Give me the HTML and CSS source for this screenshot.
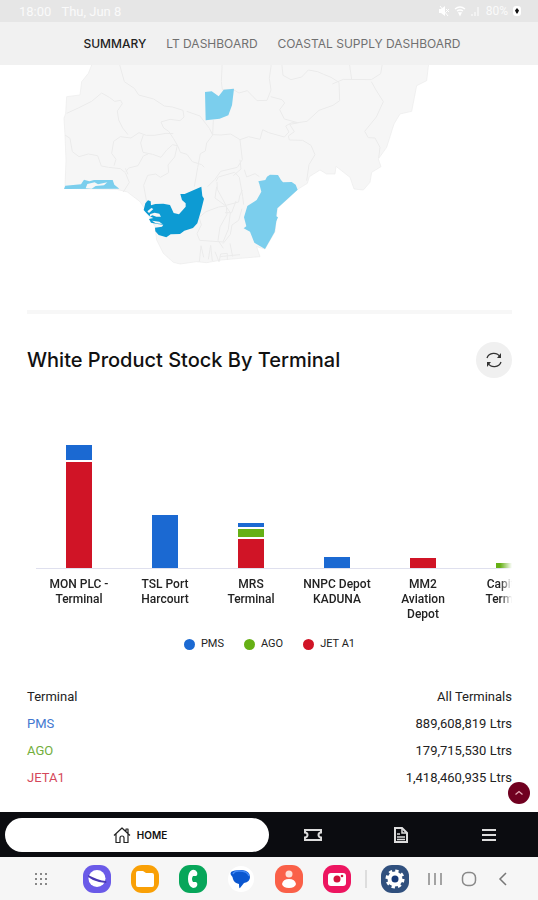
FILE: index.html
```html
<!DOCTYPE html>
<html lang="en">
<head>
<meta charset="utf-8">
<meta name="viewport" content="width=device-width, initial-scale=1">
<title>White Product Stock</title>
<link rel="stylesheet" href="styles.css">
</head>
<body>
<div class="app">
  <header class="status">
    <span class="status-time">18:00</span>
    <span>Thu, Jun 8</span>
    <span class="status-icons">
      <svg width="10" height="12" viewBox="0 0 10 12"><path d="M0 4h2l4-3v10l-4-3H0z" fill="#fff"/><path d="M1 1l8 10M7 4l3 3m0-3L7 7" stroke="#fff"/></svg>
      <svg width="12" height="12" viewBox="0 0 12 12"><path d="M1 4q5-4 10 0M3 6q3-2 6 0M5 8h2L6 10z" fill="none" stroke="#fff" stroke-width="1.3"/></svg>
      <svg width="10" height="12" viewBox="0 0 10 12"><path d="M1 11V9M4 11V7M7 11V2" stroke="#f6f6f6" stroke-width="1.5"/></svg>
      <span>80%</span>
      <svg width="8" height="12" viewBox="0 0 8 12"><rect y="1" width="8" height="10" rx="3" fill="#fff"/><path d="M4 3L6 5.500 4.500 8.500h-1L2 5.500z" fill="#111"/></svg>
    </span>
  </header>
  <nav class="tabs" aria-label="Dashboards">
    <a class="tab tab-active" href="#summary">SUMMARY</a>
    <a class="tab" href="#lt">LT DASHBOARD</a>
    <a class="tab" href="#coastal">COASTAL SUPPLY DASHBOARD</a>
  </nav>
  <main class="content">
    <svg class="map" viewBox="27 65 485 202" role="img" aria-label="Map of stock by state">
      <g transform="translate(40 60) scale(.33333)" stroke-linejoin="round">
        <path class="land" d="M170 0L155 15l-10 25-20 25-5 40-40 5-3 50-5 15 3 50 3 75-3 85 155 3 32 8 38 29 20 30 25 45 5 40 20 40 30 27 20 5 50-7 30 3 45-8 55-5 60-5-10-30 25 7 30-52 7-70 61-57 29-18 6-20 32-20 20 12h25l3-23 42 33 12 35 28 3 20-23 5-30 28-17-8-23 25-35 22-70 18-30 35-8 15-77 30-15 7-60z"/>
        <g class="border">
          <path d="M80 160l35-16 40-20 30-25 23 13 16 12 18-3 5 10-15 22 4 27 12 24 16 20"/>
          <path d="M235 0l18 65 30 20 13 20 45 12 32 21 24 3 32 10 3 20-12 11-30-4-27 8 8 18 15 10 14 21 14 24 7 18 20 6 16 22 28 9 8 8"/>
          <path d="M75 225l15 10 7 40 20 15 28-8 28 5 11 31 22 4 35 4 15 12 12 29-18 29"/>
          <path d="M222 317l6-19-13-18 6-36 20-14 32 4 24-16 22 8 24 0 35-6 22 1"/>
          <path d="M310 225l-8 24 7 28 29 6 25 9 17-22 18-16 13 3"/>
          <path d="M258 335l8-11 28-7 16-29 14-6M256 325l8 18"/>
          <path d="M320 426l-9-50 12-30 24-4 14 10 25-14-2-23 20-24 8-34"/>
          <path d="M547 0l-3 65 3 24 22 0 8-2 20 12 25-7 29 30 30-1 12-31-5-35 7-50"/>
          <path d="M520 180l-2 44 25 1 29-3 28 17 7 60-15 23-50 12-17 24-22 22"/>
          <path d="M440 154l40 14 28 37 10 20-18 24-4 24-15 8-8 42-10 57"/>
          <path d="M600 239l26-9 34 8 8-29 18 9 47 13 14-15-10-18 18-10 22 0"/>
          <path d="M692 110l34 9 8 10-15 20 14 28 40 11 28-4 36-33 42-15 20-14-2-55-24-15-22-9-18-8-28-5-20 21-32 8-24-13-4-40"/>
          <path d="M773 189l-24 4 14 22-18 13 3 12 40 1 25 15 12 28-18 30-7 48"/>
          <path d="M877 72l33-14 84 1 28-18 6-36M935 58l-8-55M994 65l14 25 22 35-21 46-35 43 11 19 20 1 15 28-4 32"/>
          <path d="M600 299l3 28-23 20M528 364l7-13 49-14 14 15 10 57 3 25M607 390l-8 18-3 18-38 10-26-48-1-22M658 350l-13-9-25 10-7-22M530 380l-5 34 34 25 2 24-21 38-6 40 16 24"/>
          <path d="M480 470l18-15 38-14 21-3 14 20-6 50-16 38-70-5-8-20 13-26-7-25M549 551l22-28 5-28 20-14 10-35M570 550l8 40M555 458l20 0 13-35"/>
          <path d="M478 605l5-48 8 35M505 598l7-42 5 47M525 575l12 30 5-23 20-2 0 20M540 590l60-6"/>
        </g>
        <path class="stock-low" d="M495 96l20-2 21 15 15-20 31-3-6 50-11 30-26 10-42 5z"/>
        <path class="stock-low" d="M72 387l4-10 47-4 9-14 16 5 14-4h56l5 14 15 12z"/>
        <path class="map-gap" d="M142 372l22-5 10 6 28-6-10 9-25 2-12 8-18-1z"/>
        <path class="stock-high" d="M421 402L434 402 484 380 487 408 492 416 483 452 472 490 459 504 433 512 420 522 392 523 379 532 356 525 346 514 345 503 366 500 370 494 352 492 333 488 327 477 340 474 328 468 319 459 311 450 316 430 324 421 332 424 333 436 346 432 370 431 390 435 401 459 417 463 437 440 437 430 426 420z"/>
        <path class="map-gap" d="M331 462l13-4 14 3 5 9-14 0-12-4-9 5zM336 482l22 3 9 7-20-2zM322 454l12-10 6 3-13 12z"/>
        <path class="stock-low" d="M655 364L676 360 681 350 690 344 714 345 723 360 729 367 755 366 767 374 773 389 712 445 709 469 714 472 709 484 704 516 675 567 643 548 630 515 611 505 619 499 612 472 622 438 650 420 664 395 658 372z"/>
      </g>
    </svg>
    <hr class="rule">
    <section class="stock" aria-labelledby="stock-title">
      <div class="stock-head">
        <h1 id="stock-title" class="title">White Product Stock By Terminal</h1>
        <button class="refresh" type="button" aria-label="Refresh">
          <svg width="18" height="18" viewBox="0 0 18 18" fill="none" stroke="#333" stroke-width="1.300"><path d="M2 7a7 6.500 0 0 1 13-1M16 11a7 6.500 0 0 1-13 1"/><path d="M16 2v5h-4zM2 16v-5h4z" fill="#333" stroke="none"/></svg>
        </button>
      </div>
      <div class="chart">
        <div class="column"><div class="bar"><i class="pms" style="height:15px"></i><i class="jet" style="height:106px"></i></div><p class="label">MON PLC -<br>Terminal</p></div>
        <div class="column"><div class="bar"><i class="pms" style="height:53px"></i></div><p class="label">TSL Port<br>Harcourt</p></div>
        <div class="column"><div class="bar"><i class="pms" style="height:4px"></i><i class="ago" style="height:8px"></i><i class="jet" style="height:29px"></i></div><p class="label">MRS<br>Terminal</p></div>
        <div class="column"><div class="bar"><i class="pms" style="height:11px"></i></div><p class="label">NNPC Depot<br>KADUNA</p></div>
        <div class="column"><div class="bar"><i class="jet" style="height:10px"></i></div><p class="label">MM2<br>Aviation<br>Depot</p></div>
        <div class="column"><div class="bar"><i class="ago" style="height:5px"></i></div><p class="label">Capital -<br>Terminal</p></div>
      </div>
      <ul class="legend">
        <li><i class="dot pms"></i>PMS</li>
        <li><i class="dot ago"></i>AGO</li>
        <li><i class="dot jet"></i>JET A1</li>
      </ul>
      <table class="totals">
        <thead><tr><th scope="col">Terminal</th><th scope="col">All Terminals</th></tr></thead>
        <tbody>
          <tr><th scope="row" class="text-pms">PMS</th><td>889,608,819 Ltrs</td></tr>
          <tr><th scope="row" class="text-ago">AGO</th><td>179,715,530 Ltrs</td></tr>
          <tr><th scope="row" class="text-jet">JETA1</th><td>1,418,460,935 Ltrs</td></tr>
        </tbody>
      </table>
    </section>
  </main>
  <nav class="bottom" aria-label="Main">
    <a class="home" href="#home">
      <svg width="18" height="18" viewBox="0 0 18 18" fill="none" stroke="#222" stroke-width="1.200" stroke-linejoin="round"><path d="M1 9.500L9 2l8 7.500M3 8v8.500h4V12a2 2 0 0 1 4 0v4.500h4V8M13 5V3h2v4"/></svg>
      HOME
    </a>
    <a class="item" href="#tickets" aria-label="Tickets"><svg width="20" height="16" viewBox="0 0 20 16" fill="none" stroke="#ddd" stroke-width="2"><path d="M2 3h16v2.500a2.500 2.500 0 0 0 0 5V13H2v-2.500a2.500 2.500 0 0 0 0-5z"/></svg></a>
    <a class="item" href="#reports" aria-label="Reports"><svg width="16" height="18" viewBox="0 0 16 18" fill="none" stroke="#ddd" stroke-width="2"><path d="M2 2h7l5 5v9H2z"/><path d="M9 2v5h5M4 8h3M4 11h8M4 13.500h8" stroke-width="1.500"/></svg></a>
    <a class="item" href="#menu" aria-label="Menu"><svg width="16" height="16" viewBox="0 0 16 16" stroke="#ddd" stroke-width="2"><path d="M1 3h14M1 8h14M1 13h14"/></svg></a>
  </nav>
  <footer class="system">
    <button type="button" aria-label="All apps"><svg width="14" height="14" viewBox="0 0 14 14" stroke="#888" stroke-width="2" stroke-dasharray="2 3"><path d="M1 2h12M1 7h12M1 12h12"/></svg></button>
    <div class="apps">
      <button type="button" aria-label="Browser"><svg width="30" height="30" viewBox="0 0 30 30"><rect x="1" y="1" width="28" height="28" rx="11" fill="#6a5ae8"/><circle cx="15" cy="14.500" r="8.500" fill="#fff"/><path d="M6 11q-1 2 5 5 7 3 13 3 1-1 0-2-4 0-9-2-5-2-9-4z" fill="#4a38b4"/></svg></button>
      <button type="button" aria-label="Files"><svg width="30" height="30" viewBox="0 0 30 30"><rect x="1" y="1" width="28" height="28" rx="11" fill="#f9a006"/><path d="M8 7h5l3 2h6q2 0 2 2v10q0 2-2 2H8q-2 0-2-2V9q0-2 2-2z" fill="#fff"/></svg></button>
      <button type="button" aria-label="Phone"><svg width="30" height="30" viewBox="0 0 30 30"><rect x="1" y="1" width="28" height="28" rx="11" fill="#07a65a"/><path d="M14 6q-4 2-4 9 0 7 5 9 3 0 4-2 1-3-1-4h-3q-2-3 0-6h3q2-1 1-4-2-3-5-2z" fill="#fff"/></svg></button>
      <button type="button" aria-label="Messages"><svg width="30" height="30" viewBox="0 0 30 30"><circle cx="15" cy="15" r="13" fill="#fff"/><path d="M5 8q2-2 11-2 8 1 8 7 0 5-6 6l-4 5q-1 1-1-4-5-1-6-5 0-2-2-4-1-1 0-3z" fill="#0b57d0"/><path d="M7 10q1-3 6-3 9 0 10 5" fill="none" stroke="#4288f5" stroke-width="1.500"/></svg></button>
      <button type="button" aria-label="Contacts"><svg width="30" height="30" viewBox="0 0 30 30"><rect x="1" y="1" width="28" height="28" rx="11" fill="#fa6048"/><circle cx="15" cy="10" r="3.500" fill="#ffe0d8"/><path d="M8 20q1-5 7-5t7 5q-1 4-7 4t-7-4z" fill="#fff"/></svg></button>
      <button type="button" aria-label="Camera"><svg width="30" height="30" viewBox="0 0 30 30"><rect x="1" y="1" width="28" height="28" rx="11" fill="#ed1560"/><rect x="6" y="9" width="18" height="13" rx="3" fill="#fff"/><circle cx="15" cy="15" r="3.500" fill="#d3123c"/><circle cx="20" cy="12" r="1.300" fill="#d3123c"/></svg></button>
      <span class="divider"></span>
      <button type="button" aria-label="Settings"><svg width="30" height="30" viewBox="0 0 30 30"><rect x="1" y="1" width="28" height="28" rx="11" fill="#30507e"/><circle cx="15" cy="15" r="7.500" fill="#fff"/><circle cx="15" cy="15" r="8" fill="none" stroke="#fff" stroke-width="3" stroke-dasharray="3.300 2.980"/><circle cx="15" cy="15" r="3.500" fill="#173a78"/></svg></button>
    </div>
    <div class="keys">
      <button type="button" aria-label="Recents"><svg width="14" height="16" viewBox="0 0 14 16" stroke="#888" stroke-width="1.500"><path d="M1 2v12M7 2v12M13 2v12"/></svg></button>
      <button type="button" aria-label="Home"><svg width="16" height="16" viewBox="0 0 16 16" fill="none" stroke="#888" stroke-width="1.500"><rect x="1.500" y="1.500" width="13" height="13" rx="5"/></svg></button>
      <button type="button" aria-label="Back"><svg width="14" height="16" viewBox="0 0 14 16" fill="none" stroke="#777" stroke-width="1.500"><path d="M10 2L4 8l6 6"/></svg></button>
    </div>
  </footer>
  <button class="to-top" type="button" aria-label="Back to top"><svg width="10" height="10" viewBox="0 0 10 10" fill="none" stroke="#e5a8b5" stroke-width="1.300"><path d="M1.500 6.500L5 3.500l3.500 3"/></svg></button>
</div>
</body>
</html>
```
FILE: styles.css
```css
* { box-sizing: border-box; }
body { margin: 0; background: #fff; color: #222; font-family: Roboto, "Liberation Sans", sans-serif; }
button { display: flex; align-items: center; justify-content: center; padding: 0; border: 0; background: none; }
svg { display: block; }
a { text-decoration: none; }
.app { display: flex; flex-direction: column; min-height: 100vh; }

.status { display: flex; align-items: center; gap: 10px; height: 22px; padding: 0 17px 0 19px; background: #e6e6e6; color: #fafafa; font-size: 13px; }
.status-icons { display: flex; align-items: center; gap: 5px; margin-left: auto; font-size: 12px; }

.tabs { display: flex; align-items: center; justify-content: center; gap: 20px; height: 43px; padding-left: 6px; background: #f1f1f1; font-family: Inter, sans-serif; font-size: 12px; font-weight: 400; white-space: nowrap; }
.tab { color: #707070; }
.tab-active { color: #222; font-weight: 500; }

.content { flex: 1; padding: 0 26px 0 27px; }
.map { width: 100%; height: auto; }
.land { fill: #f6f6f6; stroke: #ebebeb; stroke-width: 2; }
.border { fill: none; stroke: #ebebeb; stroke-width: 3; }
.stock-low { fill: #7bceed; }
.stock-high { fill: #0d9bd3; }
.map-gap { fill: #f7f7f7; }
.rule { height: 4px; margin: 43px 0 28px; border: 0; background: #f7f7f7; }

.stock-head { display: flex; align-items: center; justify-content: space-between; }
.title { margin: 0; color: #111; font-family: Inter, sans-serif; font-size: 20px; font-weight: 500; line-height: 24px; }
.refresh { width: 36px; height: 36px; border-radius: 50%; background: #f0f0f0; }

.chart { display: flex; margin: 65px 0 0 9px; overflow: hidden; -webkit-mask-image: linear-gradient(to left, transparent, #000 12px); mask-image: linear-gradient(to left, transparent, #000 12px); }
.column { flex: 0 0 86px; }
.bar { display: flex; flex-direction: column; align-items: center; justify-content: flex-end; gap: 2px; height: 126px; border-bottom: 1px solid #dfe0ee; }
.bar i { width: 26px; }
.pms { background: #1b69d2; }
.ago { background: #66b015; }
.jet { background: #d01426; }
.label { margin: 8px 0 0; color: #222; font-size: 12px; font-weight: 500; line-height: 15px; text-align: center; }

.legend { display: flex; justify-content: center; gap: 20px; margin: 14px 0 0; padding: 0; list-style: none; font-size: 11px; line-height: 16px; }
.legend li { display: flex; align-items: center; gap: 6px; }
.dot { width: 11px; height: 11px; border-radius: 50%; }

.totals { width: 100%; margin-top: 31px; border-collapse: collapse; font-size: 13px; line-height: 27px; }
.totals th, .totals td { padding: 0; font-weight: 400; text-align: left; }
.totals th:last-child, .totals td { text-align: right; }
.totals .text-pms { color: #4378d0; }
.totals .text-ago { color: #72ae3c; }
.totals .text-jet { color: #d5485b; }

.bottom { display: flex; align-items: center; height: 45px; padding: 0 5px; background: #0b0c10; }
.home { display: flex; flex: 1; align-items: center; justify-content: center; gap: 6px; height: 34px; padding-left: 6px; border-radius: 17px; background: #fff; color: #111; font-family: Inter, sans-serif; font-size: 10px; font-weight: 600; }
.item { display: flex; flex: 0 0 88px; justify-content: center; }

.system { display: flex; align-items: center; height: 43px; padding: 0 28px 0 34px; background: #f6f6f6; }
.apps { display: flex; align-items: center; gap: 18px; margin-left: auto; }
.divider { width: 2px; height: 18px; margin: 0 -5px; background: #ddd; }
.keys { display: flex; align-items: center; gap: 19px; margin-left: 18px; }

.to-top { position: fixed; right: 8px; bottom: 96px; width: 22px; height: 22px; border-radius: 50%; background: #700020; }
```
